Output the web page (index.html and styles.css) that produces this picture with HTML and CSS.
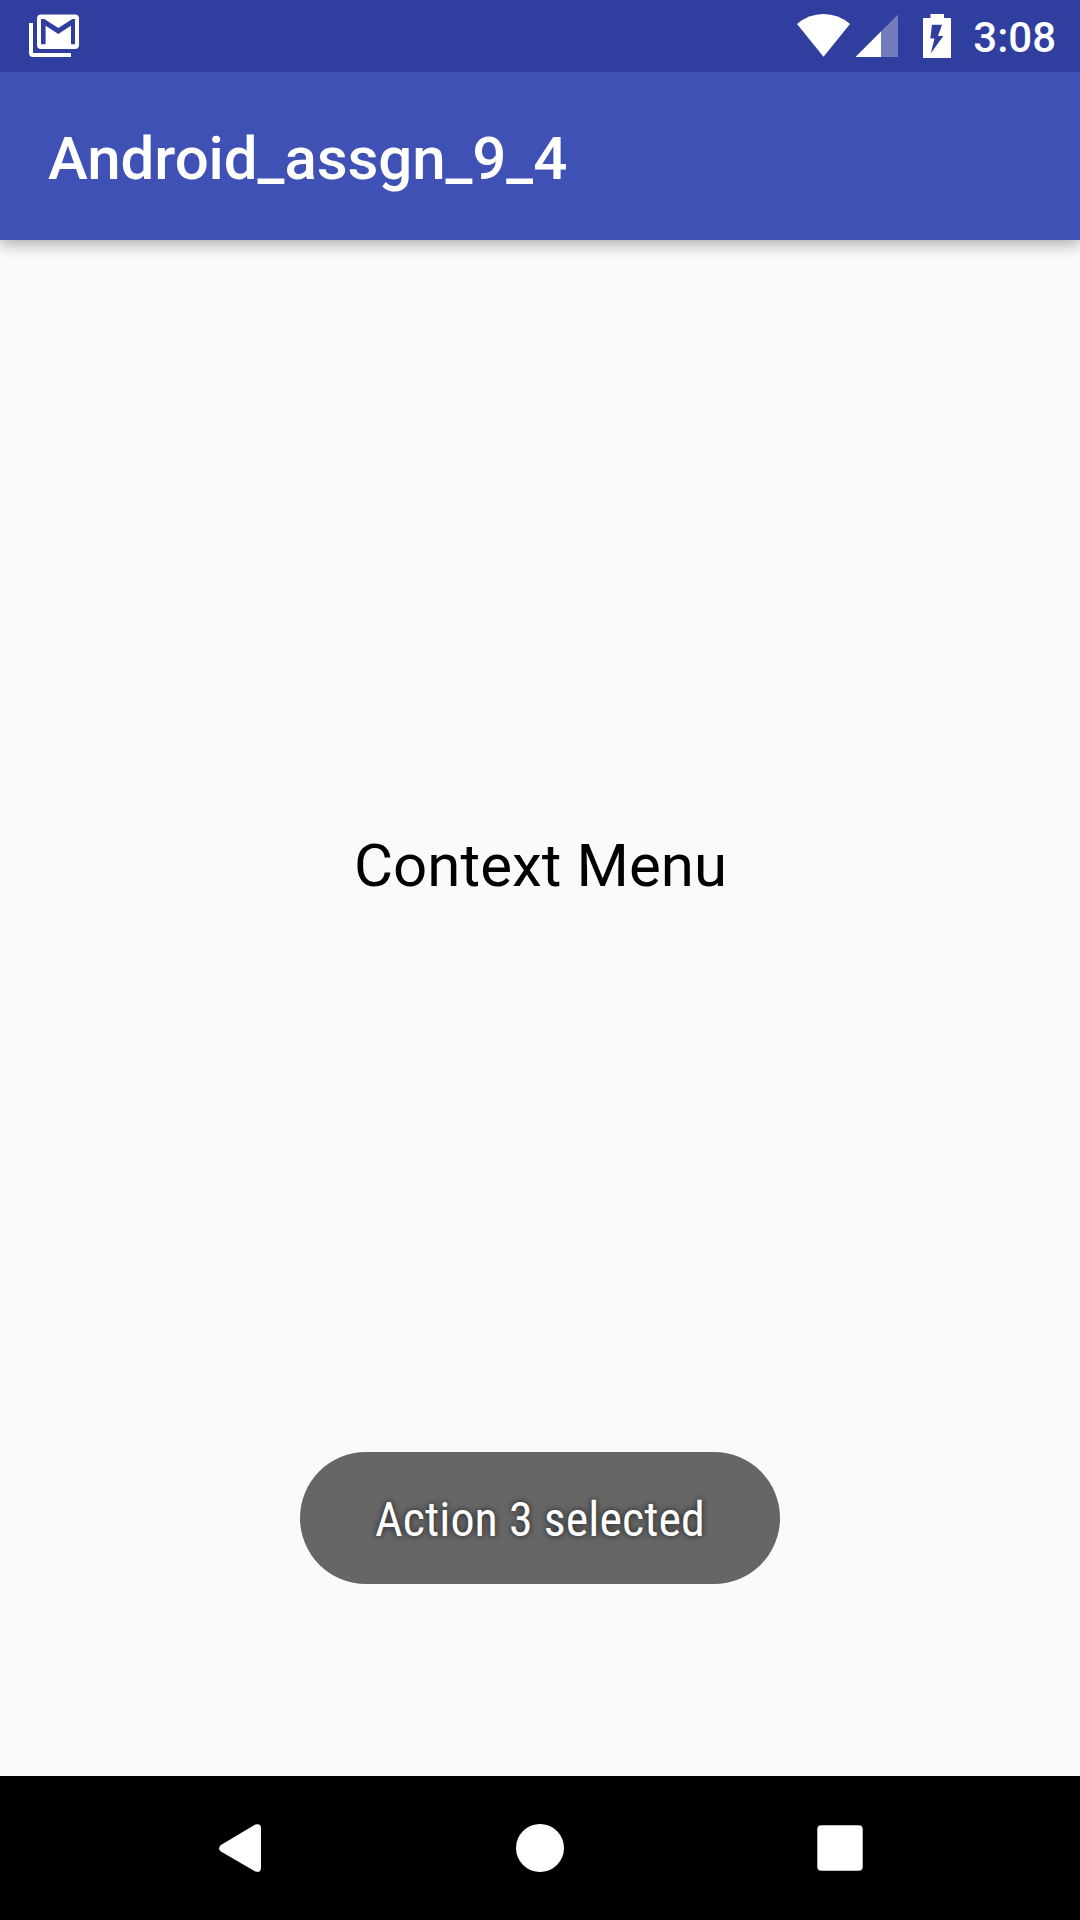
FILE: index.html
```html
<!DOCTYPE html>
<html lang="en">
<head>
<meta charset="utf-8">
<title>Android_assgn_9_4</title>
<link rel="stylesheet" href="styles.css">
</head>
<body>
<div class="screen">
  <header class="status-bar">
    <svg class="mail-icon" viewBox="28 0 52 72" width="52" height="72">
      <path fill="#fff" d="M29 23h4v30h38v4H33a4 4 0 0 1-4-4z"/>
      <path fill="#fff" fill-rule="evenodd" d="M41 14.5h34a4 4 0 0 1 4 4V45a4 4 0 0 1-4 4H41a4 4 0 0 1-4-4V18.500a4 4 0 0 1 4-4zM41 19v25.300h4.600V25.700L58.300 34 71 25.700v18.600h4V19h-2.700l-14 9-14-9z"/>
    </svg>
    <div class="status-icons">
      <svg viewBox="797 0 54 72" width="54" height="72"><path fill="#fff" d="M797 24Q808.500 14 823.500 14T850 24L823.500 56.800z"/></svg>
      <svg viewBox="855 0 44 72" width="44" height="72"><path fill="#747cbc" d="M898 14.500V57H855.500z"/><path fill="#fff" d="M881 31.500V57H855.500z"/></svg>
      <svg class="battery" viewBox="923 0 28 72" width="28" height="72"><path fill="#fff" fill-rule="evenodd" d="M930.500 14h13.500v4h7v40h-28V18h7.500zM932 24.700l-1.700 13.800h4.200L930.700 53.500 943.300 36h-5.300l4-11.300z"/></svg>
      <span class="clock">3:08</span>
    </div>
  </header>
  <div class="app-bar"><h1 class="title">Android_assgn_9_4</h1></div>
  <main class="content">
    <p class="label">Context Menu</p>
    <div class="toast"><span class="toast-text">Action 3 selected</span></div>
  </main>
  <nav class="nav-bar">
    <svg viewBox="0 0 48 48" width="48" height="48"><path fill="#fff" d="M4.900 20.900 39.300 .6Q45 -1.200 45 4.600V43.400Q45 49.200 39.300 47.400L4.900 27.500Q1.300 24.200 4.900 20.900z"/></svg>
    <svg viewBox="0 0 48 48" width="48" height="48"><circle fill="#fff" cx="24" cy="24" r="24"/></svg>
    <svg viewBox="0 0 48 48" width="48" height="48"><rect fill="#fff" x="1.300" y="1.300" width="45.400" height="45.400" rx="4"/></svg>
  </nav>
</div>
</body>
</html>
```
FILE: styles.css
```css
* { box-sizing: border-box; }
body { margin: 0; font-family: Roboto, sans-serif; }
.screen { width: 1080px; height: 1920px; display: flex; flex-direction: column; background: #fafafa; overflow: hidden; }
svg { display: block; flex: none; }
.status-bar { height: 72px; flex: none; display: flex; justify-content: space-between; padding: 0 24px 0 28px; background: #303f9f; color: #fff; z-index: 2; }
.status-icons { display: flex; gap: 4px; }
.battery { margin-left: 20px; }
.clock { margin-left: 18px; font-size: 42px; font-weight: 500; line-height: 75px; }
.app-bar { height: 168px; flex: none; padding: 0 48px; background: #3f51b5; color: #fff; box-shadow: 0 5px 14px rgba(0, 0, 0, .3); z-index: 1; }
.title { margin: 0; font-size: 60px; font-weight: 500; line-height: 174px; letter-spacing: -.07px; }
.content { flex: 1; display: flex; flex-direction: column; align-items: center; justify-content: space-between; padding: 591px 0 192px; }
.label { margin: 0; padding-left: 1px; font-size: 60px; line-height: 70px; letter-spacing: .05px; color: #000; }
.toast { width: 480px; height: 132px; border-radius: 66px; display: flex; align-items: center; justify-content: center; padding-top: 4px; background: #666; color: #fff; }
.toast-text { font-family: "Roboto Condensed", Roboto, sans-serif; font-stretch: 75%; font-size: 48px; line-height: 56px; letter-spacing: .06px; white-space: nowrap; text-shadow: 0 0 6px rgba(0, 0, 0, .73); }
.nav-bar { height: 144px; flex: none; display: flex; align-items: center; justify-content: center; gap: 252px; background: #000; }
```
